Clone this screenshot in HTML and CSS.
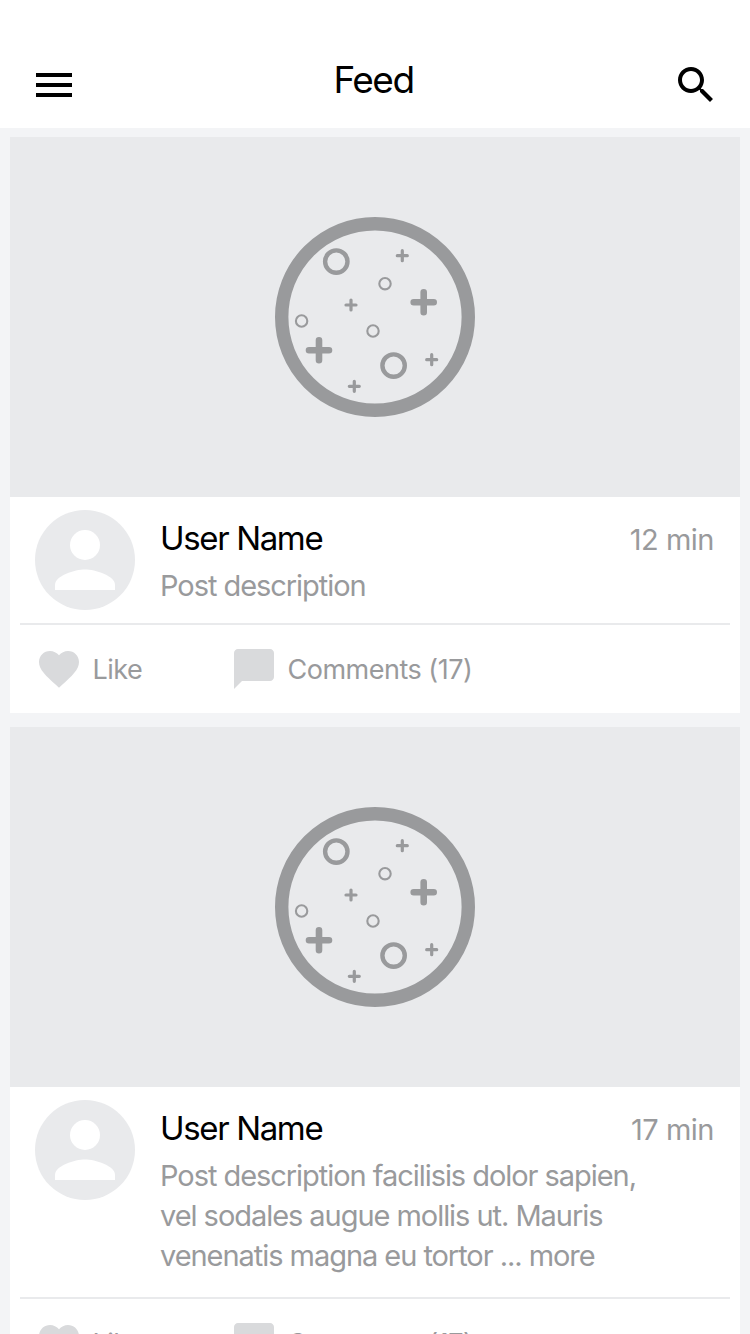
FILE: index.html
```
<!DOCTYPE html>
<html lang="en">
<head>
<meta charset="utf-8">
<title>Feed</title>
<link rel="stylesheet" href="styles.css">
</head>
<body>
<svg class="sprite" aria-hidden="true">
  <symbol id="planet" viewBox="0 0 200 200">
    <g fill="none" stroke="currentColor">
      <circle cx="100" cy="100" r="93.3" stroke-width="13.4"/>
      <g stroke-width="4.4"><circle cx="61.3" cy="44.6" r="11.2"/><circle cx="118.6" cy="148.6" r="11.2"/></g>
      <g stroke-width="2.1"><circle cx="110" cy="66.7" r="5.7"/><circle cx="26.6" cy="104" r="5.7"/><circle cx="98" cy="114" r="5.7"/></g>
      <g stroke-width="6.6" stroke-linecap="round"><path d="M138.7 85.3h20M148.7 75.3v20M34 133.3h20M44 123.3v20"/></g>
      <g stroke-width="3.2" stroke-linecap="round"><path d="M122.3 38.7h10M127.3 33.7v10M71 88h10M76 83v10M151.7 142.7h10M156.7 137.7v10M74.3 169.3h10M79.3 164.3v10"/></g>
    </g>
  </symbol>
  <symbol id="person" viewBox="0 0 100 100">
    <circle cx="50" cy="50" r="50" fill="#e9eaec"/>
    <circle cx="50" cy="35" r="15" fill="#fff"/>
    <path d="M20 80v-5c0-9.5 20-15.5 30-15.5s30 6 30 15.5v5z" fill="#fff"/>
  </symbol>
  <symbol id="heart" viewBox="0 0 24 24"><path fill="currentColor" d="M12 21.35l-1.45-1.32C5.4 15.36 2 12.28 2 8.5 2 5.42 4.42 3 7.5 3c1.74 0 3.41.81 4.5 2.09C13.09 3.81 14.76 3 16.5 3 19.58 3 22 5.42 22 8.5c0 3.78-3.4 6.86-8.55 11.54L12 21.35z"/></symbol>
  <symbol id="bubble" viewBox="0 0 24 24"><path fill="currentColor" d="M20 2H4c-1.1 0-2 .9-2 2v18l4-4h14c1.1 0 2-.9 2-2V4c0-1.1-.9-2-2-2z"/></symbol>
</svg>

<header class="bar">
  <svg class="icon" viewBox="0 0 24 24"><path d="M3 18h18v-2H3v2zm0-5h18v-2H3v2zm0-7v2h18V6H3z"/></svg>
  <h1 class="title">Feed</h1>
  <svg class="icon" viewBox="0 0 24 24"><path d="M15.5 14h-.79l-.28-.27C15.41 12.59 16 11.11 16 9.5 16 5.91 13.09 3 9.5 3S3 5.91 3 9.5 5.91 16 9.5 16c1.61 0 3.09-.59 4.23-1.57l.27.28v.79l5 4.99L20.49 19l-4.99-5zm-6 0C7.01 14 5 11.99 5 9.5S7.01 5 9.5 5 14 7.01 14 9.5 11.99 14 9.5 14z"/></svg>
</header>

<main class="feed">
  <article class="card">
    <div class="media"><svg class="planet"><use href="#planet"/></svg></div>
    <div class="info">
      <svg class="avatar"><use href="#person"/></svg>
      <div class="text">
        <div class="row"><h2 class="name">User Name</h2><span class="time">12 min</span></div>
        <p class="desc">Post description</p>
      </div>
    </div>
    <div class="actions">
      <div class="action like"><svg class="icon"><use href="#heart"/></svg><span>Like</span></div>
      <div class="action comments"><svg class="icon"><use href="#bubble"/></svg><span>Comments (17)</span></div>
    </div>
  </article>

  <article class="card">
    <div class="media"><svg class="planet"><use href="#planet"/></svg></div>
    <div class="info info-long">
      <svg class="avatar"><use href="#person"/></svg>
      <div class="text">
        <div class="row"><h2 class="name">User Name</h2><span class="time">17 min</span></div>
        <p class="desc">Post description facilisis dolor sapien,<br>vel sodales augue mollis ut. Mauris<br>venenatis magna eu tortor ... more</p>
      </div>
    </div>
    <div class="actions">
      <div class="action like"><svg class="icon"><use href="#heart"/></svg><span>Like</span></div>
      <div class="action comments"><svg class="icon"><use href="#bubble"/></svg><span>Comments (17)</span></div>
    </div>
  </article>
</main>
</body>
</html>
```
FILE: styles.css
```
* { box-sizing: border-box; }
html, body { height: 1334px; overflow: hidden; }
body {
  margin: 0;
  background: #f3f4f6;
  color: #000;
  font-family: Inter, "Liberation Sans", sans-serif;
}
h1, h2, p { margin: 0; font-weight: 400; }
svg { display: block; flex: none; }
.sprite { display: none; }
.icon { width: 48px; height: 48px; }

.bar {
  display: flex;
  justify-content: space-between;
  height: 128px;
  padding: 61px 30px 0;
  background: #fff;
}
.title {
  padding-right: 3px;
  font-size: 37px;
  line-height: 38px;
  letter-spacing: -1.5px;
}

.feed {
  display: flex;
  flex-direction: column;
  gap: 14px;
  padding: 9px 10px 0;
}
.card { background: #fff; }
.media {
  display: grid;
  place-items: center;
  height: 360px;
  background: #e9eaec;
  color: #999a9c;
}
.planet { width: 200px; height: 200px; }

.info {
  display: flex;
  gap: 25px;
  height: 126px;
  padding: 13px 25px 0;
}
.info-long { height: 210px; }
.avatar { width: 100px; height: 100px; }
.text { flex: 1; padding-top: 8px; }
.row {
  display: flex;
  justify-content: space-between;
  align-items: baseline;
  height: 48px;
  padding-right: 1px;
}
.name { font-size: 33px; line-height: 41px; letter-spacing: -1.35px; }
.time { font-size: 29px; line-height: 40px; letter-spacing: -0.5px; color: #999a9c; }
.desc { font-size: 29px; line-height: 40px; letter-spacing: -1.05px; color: #999a9c; white-space: nowrap; }

.actions {
  display: flex;
  align-items: center;
  height: 90px;
  margin: 0 10px;
  padding-left: 15px;
  border-top: 2px solid #e9eaec;
  font-size: 27px;
  letter-spacing: -0.5px;
  color: #999a9c;
}
.actions .icon { color: #d9dadc; }
.action { display: flex; align-items: center; gap: 9.5px; }
.like { width: 195px; }
```
